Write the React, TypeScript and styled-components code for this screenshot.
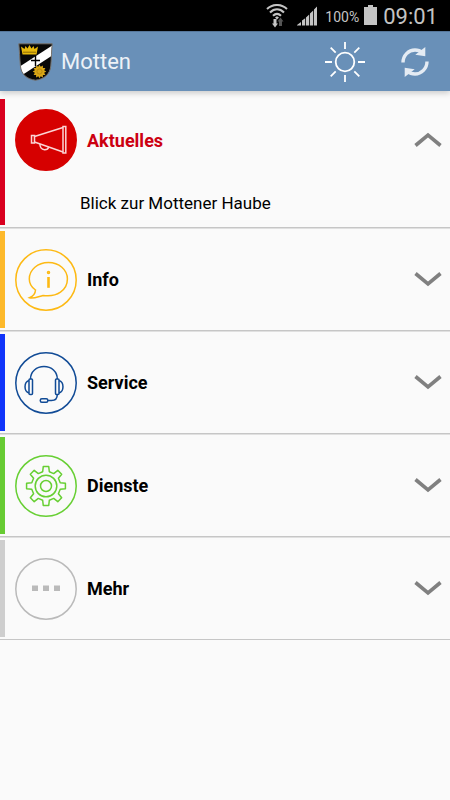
import React, { useState } from 'react';
import styled, { createGlobalStyle } from 'styled-components';

const GlobalStyle = createGlobalStyle`
  * { box-sizing: border-box; }
  body {
    margin: 0;
    background: #fafafa;
    font-family: Roboto, "Liberation Sans", sans-serif;
    color: #000;
  }
  button { font: inherit; color: inherit; background: none; border: 0; padding: 0; margin: 0; cursor: pointer; }
  svg { display: block; flex: none; }
`;

const StatusBar = styled.div`
  display: flex;
  align-items: center;
  justify-content: flex-end;
  height: 31px;
  padding-right: 12px;
  background: #000;
  color: #c4c4c4;
`;

const BatteryText = styled.span`
  margin: 2px 5px 0 8px;
  font-size: 14px;
  line-height: 16px;
`;

const Clock = styled.time`
  margin-left: 6px;
  font-size: 22px;
  line-height: 28px;
  padding-top: 2px;
`;

const SignalIcon = styled.svg`
  margin-left: 9px;
`;

const Toolbar = styled.header`
  position: relative;
  display: flex;
  align-items: center;
  height: 60px;
  padding: 0 10px 0 18px;
  background: #6990b8;
  border-top: 1px solid #56779b;
  box-shadow: 0 2px 6px rgba(0, 0, 0, 0.2);
`;

const Title = styled.h1`
  flex: 1;
  margin: 0 0 0 8px;
  padding-top: 1px;
  font-size: 22px;
  line-height: 28px;
  font-weight: 400;
  color: #edf2f7;
`;

const Actions = styled.div`
  display: flex;
  gap: 20px;
`;

const ActionButton = styled.button`
  display: grid;
  place-items: center;
  width: 50px;
  height: 48px;
`;

const Menu = styled.main`
  padding-top: 5px;
`;

const Section = styled.section`
  padding: 3px 0 2px;
  border-bottom: 1px solid #c6c6c6;
  box-shadow: 0 1px 0 #e0e0e0;
`;

const SectionBody = styled.div<{ $color: string }>`
  border-left: 5px solid ${(p) => p.$color};
`;

const SectionHeader = styled.button<{ $open: boolean; $accent: string }>`
  display: flex;
  align-items: center;
  width: 100%;
  height: ${(p) => (p.$open ? 82 : 97)}px;
  padding: 0 8px 0 10px;
  text-align: left;
  color: ${(p) => (p.$open ? p.$accent : '#000')};
`;

const Label = styled.span`
  flex: 1;
  margin-left: 10px;
  padding-top: 1px;
  font-size: 18px;
  line-height: 24px;
  font-weight: 700;
`;

const SubItem = styled.a`
  display: block;
  padding: 10px 16px 10px 75px;
  font-size: 17px;
  line-height: 24px;
  color: #000;
  text-decoration: none;
`;

const gearPath = Array.from({ length: 8 }, (_, i) => {
  const mid = (i * Math.PI) / 4 - Math.PI / 2;
  return [
    [-0.23, 14.6],
    [-0.14, 19.6],
    [0.14, 19.6],
    [0.23, 14.6],
  ]
    .map(([a, r], j) => {
      const x = (31 + r * Math.cos(mid + a)).toFixed(2);
      const y = (31 + r * Math.sin(mid + a)).toFixed(2);
      return `${i === 0 && j === 0 ? 'M' : 'L'}${x} ${y}`;
    })
    .join('');
}).join('') + 'Z';

const sunPoints = Array.from({ length: 24 }, (_, i) => {
  const r = i % 2 ? 4.8 : 6.8;
  const a = (i * Math.PI) / 12;
  return `${(21.5 + r * Math.cos(a)).toFixed(2)},${(28.5 + r * Math.sin(a)).toFixed(2)}`;
}).join(' ');

const drawings = {
  megaphone: (
    <>
      <rect x="16.5" y="26.5" width="3" height="7.5" />
      <path d="M19.5 27.5 48 18.5M19.5 33 48 43" />
      <rect x="48" y="17.5" width="2.8" height="26.5" />
      <path d="M25 35c-.3 3 1.4 5.5 4.5 5.7 2.2.1 3.7-1 4.2-2.7" />
    </>
  ),
  info: (
    <>
      <path d="M28 46.4C42 48.6 52.4 41 52.4 30c0-9.4-8.4-16.5-19-16.5S14.3 20.6 14.3 30c0 4.5 2.1 8.2 6.2 11-.2 3.8-2.4 6.3-6 7.7 3.5 1.3 8.5-1 13.5-2.3Z" />
      <path d="M33.5 28v10.8" strokeWidth="2.6" />
      <circle cx="33.5" cy="23.5" r="1" />
    </>
  ),
  headset: (
    <>
      <path d="M15.5 27C15.5 19.5 21.5 14.5 29 14.5S42.3 19.5 42.3 27" />
      <rect x="14" y="27" width="3.5" height="15.5" rx="1" />
      <rect x="40.5" y="27" width="3.5" height="15.5" rx="1" />
      <path d="M14 28.500c-5.300 1.500-5.300 11 0 12.500M44 28.500c5.300 1.500 5.300 11 0 12.500M42.300 42.500c0 4-1.800 6-5.800 6h-3.700" />
      <rect x="25.3" y="46.7" width="7.5" height="3.5" rx="1.5" />
    </>
  ),
  gear: (
    <>
      <path d={gearPath} strokeLinejoin="round" />
      <circle cx="31" cy="31" r="10.8" />
      <circle cx="31" cy="31" r="5.5" />
    </>
  ),
  dots: (
    <g fill="currentColor" stroke="none">
      <rect x="17" y="27.5" width="6" height="5.5" />
      <rect x="28" y="27.5" width="6" height="5.5" />
      <rect x="39" y="27.5" width="6" height="5.5" />
    </g>
  ),
};

const Badge = styled.svg<{ $ink: string }>`
  color: ${(p) => p.$ink};
`;

type Entry = {
  id: string;
  label: string;
  bar: string;
  ink: string;
  fill: string;
  ring: string;
  icon: keyof typeof drawings;
  items: string[];
};

const entries: Entry[] = [
  { id: 'aktuelles', label: 'Aktuelles', bar: '#d9001f', ink: '#fbd5d5', fill: '#d60000', ring: '#d60000', icon: 'megaphone', items: ['Blick zur Mottener Haube'] },
  { id: 'info', label: 'Info', bar: '#fdb92b', ink: '#fdb913', fill: 'none', ring: '#fdb913', icon: 'info', items: [] },
  { id: 'service', label: 'Service', bar: '#1034fa', ink: '#114b96', fill: 'none', ring: '#114b96', icon: 'headset', items: [] },
  { id: 'dienste', label: 'Dienste', bar: '#67cb33', ink: '#67cf33', fill: 'none', ring: '#67cf33', icon: 'gear', items: [] },
  { id: 'mehr', label: 'Mehr', bar: '#cecece', ink: '#bababa', fill: 'none', ring: '#bababa', icon: 'dots', items: [] },
];

const Chevron = ({ up }: { up: boolean }) => (
  <svg width="28" height="16" viewBox="0 0 28 16" fill="none" stroke="#808080" strokeWidth="3.6" aria-hidden="true">
    <path d={up ? 'M1.5 13.5 14 3l12.5 10.5' : 'M1.5 1.5 14 12 26.5 1.5'} />
  </svg>
);

const shieldPath = 'M.8.8h33.4C33.4 8 33.5 15 32.8 23c-.8 8.5-7 13.2-15.3 14.2C9 36.2 3.3 31.5 2.4 23 1.7 15 1.5 8 .8.8Z';

const Crest = () => (
  <svg width="35" height="38" viewBox="0 0 35 38" role="img" aria-label="Wappen Motten">
    <defs>
      <clipPath id="shield">
        <path d={shieldPath} />
      </clipPath>
    </defs>
    <g clipPath="url(#shield)">
      <path fill="#080808" d="M0 0h35v38H0z" />
      <path fill="#fff" d="M35 2v10L5 31.5 1 24Z" />
    </g>
    <path fill="none" stroke="#77736d" d={shieldPath} />
    <path fill="#e8b90c" d="m4.500 11.500-1.500-8L6.500 6l1-3 2 2.500 2-3.500 2 3.500 2-2.500 1 3 3.500-2.500-1.500 8Z" />
    <path stroke="#8c6c05" d="M5 9.200h13" />
    <path stroke="#000" strokeWidth="1.4" d="M17.500 13v10M13 17.500h9" />
    <polygon fill="#d9a616" points={sunPoints} />
    <circle cx="21.5" cy="28.5" r="2.6" fill="none" stroke="#b98a10" />
  </svg>
);

const WifiIcon = () => (
  <svg width="22" height="24" viewBox="0 0 22 24" fill="none" stroke="#c4c4c4" strokeWidth="2.1" aria-hidden="true">
    <path d="M1 5c6-5.300 14-5.300 20 0M4 8.500c4.300-4.200 9.700-4.200 14 0M7 11.800c2.500-2.500 5.500-2.500 8 0" />
    <path fill="#c4c4c4" stroke="none" d="M11 12.300 13 13.500 11 15.500 9 13.500ZM7.500 15h3v4.500H12L9 23.500 6 19.500h1.500Z" />
    <path fill="#555" stroke="none" d="m14.500 13.500 3 4H16V22h-3v-4.500h-1.500Z" />
  </svg>
);

export default function App() {
  const [openId, setOpenId] = useState('aktuelles');

  return (
    <>
      <GlobalStyle />
      <StatusBar>
        <WifiIcon />
        <SignalIcon width="20" height="21" viewBox="0 0 20 21" fill="#c4c4c4" aria-hidden="true">
          <path d="M0 20.500v-.5l4-3v3.500ZM5 20.500v-5l3.200-2.300v7.300ZM9 20.500v-8l3.200-3v11ZM13 20.500V8.500l3.200-3v15ZM17 20.500V4.500l3-3v19Z" />
        </SignalIcon>
        <BatteryText>100%</BatteryText>
        <svg width="13" height="21" viewBox="0 0 13 21" fill="#c4c4c4" aria-hidden="true">
          <path d="M4 0h5v2h4v18H0V2h4Z" />
        </svg>
        <Clock>09:01</Clock>
      </StatusBar>

      <Toolbar>
        <Crest />
        <Title>Motten</Title>
        <Actions>
          <ActionButton type="button" aria-label="Wetter">
            <svg width="42" height="42" viewBox="0 0 42 42" fill="none" stroke="#fff" strokeWidth="1.8">
              <circle cx="21" cy="21" r="9.3" />
              <path d="M21 1v7M21 34v7M1 21h7M34 21h7M6.700 6.700l5 5M30.300 30.300l5 5M6.700 35.300l5-5M30.300 11.700l5-5" />
            </svg>
          </ActionButton>
          <ActionButton type="button" aria-label="Aktualisieren">
            <svg width="28" height="30" viewBox="0 0 28 30" fill="none" stroke="#e4ebf3" strokeWidth="3.4">
              <path d="M2 15.500C2 8.500 7.500 3 14 3c3 0 5.500 1 7.500 2.800M26 14.500C26 21.500 20.500 27 14 27c-3 0-5.500-1-7.500-2.800" />
              <path fill="#e4ebf3" stroke="none" d="M24.300 0v9.300l-10-1.500ZM3.700 30v-9.300l10 1.500Z" />
            </svg>
          </ActionButton>
        </Actions>
      </Toolbar>

      <Menu>
        {entries.map((e) => {
          const open = openId === e.id;
          return (
            <Section key={e.id}>
              <SectionBody $color={e.bar}>
                <SectionHeader
                  type="button"
                  $open={open}
                  $accent="#cc0011"
                  aria-expanded={open}
                  onClick={() => setOpenId(open ? '' : e.id)}
                >
                  <Badge $ink={e.ink} width="62" height="62" viewBox="0 0 62 62" fill="none" stroke="currentColor" strokeWidth="1.5" aria-hidden="true">
                    <circle cx="31" cy="31" r="30.2" fill={e.fill} stroke={e.ring} />
                    {drawings[e.icon]}
                  </Badge>
                  <Label>{e.label}</Label>
                  <Chevron up={open} />
                </SectionHeader>
                {open && e.items.map((item) => (
                  <SubItem key={item} href="#">{item}</SubItem>
                ))}
              </SectionBody>
            </Section>
          );
        })}
      </Menu>
    </>
  );
}
